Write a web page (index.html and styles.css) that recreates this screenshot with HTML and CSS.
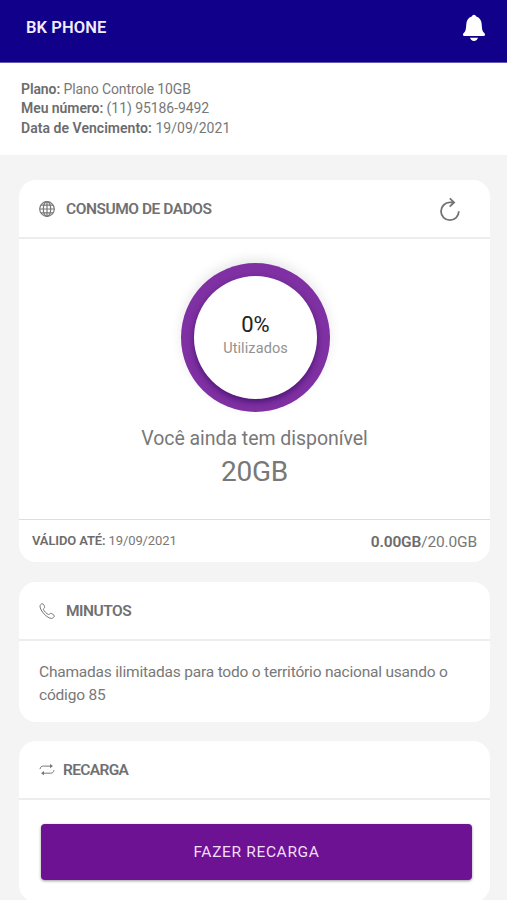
FILE: index.html
```html
<!DOCTYPE html>
<html lang="pt-BR">
<head>
<meta charset="utf-8">
<meta name="viewport" content="width=device-width, initial-scale=1">
<title>BK Phone</title>
<link rel="stylesheet" href="styles.css">
</head>
<body>
<header class="topbar">
  <h1 class="brand">BK PHONE</h1>
  <svg class="bell" viewBox="0 0 24 28" aria-hidden="true"><path d="M12 .7c1.200 0 1.700.9 2.300 1.900 3.300 1.200 5 3.400 5.400 7.500.3 4.600.4 7.100 2.600 8.900 1.300 1.100.8 3-.7 3H2.400c-1.500 0-2-1.900-.7-3 2.200-1.800 2.300-4.300 2.600-8.900.4-4.100 2.100-6.300 5.400-7.500C10.300 1.600 10.800.7 12 .7z"/><path d="M8 23.700h8c-.5 2-2 3.200-4 3.200s-3.500-1.200-4-3.200z"/></svg>
</header>
<section class="info">
  <p class="info-plan"><b>Plano:</b> Plano Controle 10GB</p>
  <p class="info-number"><b>Meu número:</b> (11) 95186-9492</p>
  <p class="info-due"><b>Data de Vencimento:</b> 19/09/2021</p>
</section>
<main class="cards">
  <section class="card usage">
    <div class="card-head">
      <svg class="icon" viewBox="0 0 16 16" aria-hidden="true"><circle cx="8" cy="8" r="7.300"/><ellipse cx="8" cy="8" rx="3.700" ry="7.300"/><path d="M8 .7v14.600M.7 8h14.600M1.800 4.200h12.400M1.800 11.800h12.400"/></svg>
      <h2 class="title title-data">CONSUMO DE DADOS</h2>
      <svg class="refresh" viewBox="0 0 22 26" aria-hidden="true"><path d="M19.800 15.300a8.900 8.900 0 1 1-8.900-8.900h3M10.800 2.300l4.300 4.100-4.400 4.300"/></svg>
    </div>
    <div class="usage-body">
      <div class="ring"><div class="disc"><strong class="percent">0%</strong><span class="used">Utilizados</span></div></div>
      <p class="available">Você ainda tem disponível</p>
      <p class="amount">20GB</p>
    </div>
    <div class="usage-foot">
      <p class="valid"><b>VÁLIDO ATÉ:</b> 19/09/2021</p>
      <p class="quota"><b>0.00GB</b>/20.0GB</p>
    </div>
  </section>
  <section class="card minutes">
    <div class="card-head">
      <svg class="icon" viewBox="0 0 16 16" aria-hidden="true"><path d="M1 3.200C1 2 2.200.7 3.200.7c1.300 0 2.600 2.700 2.400 3.700-.2.900-1.300 1-1.200 1.900.2 1.400 3.600 4.900 5.100 5.200.9.200 1.200-1.100 2.200-1.100 1.100 0 3.600 1.500 3.600 2.700 0 1.100-1.600 2.300-2.900 2.300C8.200 15.400 1 7.700 1 3.200z"/></svg>
      <h2 class="title title-minutes">MINUTOS</h2>
    </div>
    <p class="description">Chamadas ilimitadas para todo o território nacional usando o código 85</p>
  </section>
  <section class="card recharge">
    <div class="card-head">
      <svg class="icon" viewBox="0 0 16 16" aria-hidden="true"><path d="M1 7.200C1.200 5 2.500 4.100 4.500 4.100h7M15 8.100c-.2 2.200-1.500 3.100-3.500 3.100h-7"/><path class="arrow" d="M11 2l3 2.100-3 2.100zM5 9.100l-3 2.100 3 2.100z"/></svg>
      <h2 class="title title-recharge">RECARGA</h2>
    </div>
    <div class="action"><button class="button" type="button">FAZER RECARGA</button></div>
  </section>
</main>
</body>
</html>
```
FILE: styles.css
```css
* { box-sizing: border-box; }
body, h1, h2, p { margin: 0; }
html { overflow: hidden; }
body {
  height: 900px;
  overflow: hidden;
  background: #f4f4f4;
  color: #787878;
  font-family: Roboto, "Noto Sans", sans-serif;
}
b { font-weight: 600; color: #6c6c6c; }
.topbar {
  display: flex;
  justify-content: space-between;
  height: 63px;
  padding: 14px 21px 0 26px;
  background: #10008a;
  border-bottom: 1px solid #6258b0;
}
.brand { color: #f0edff; font-size: 16.500px; line-height: 27px; font-weight: 600; letter-spacing: .1px; }
.bell { width: 24px; height: 28px; fill: #fff; }
.info {
  height: 92px;
  padding: 17px 21px 0;
  background: #fff;
  font-size: 14px;
  line-height: 19.400px;
  white-space: nowrap;
}
.info-plan { letter-spacing: -.1px; }
.info-number { letter-spacing: -.07px; }
.info-due { letter-spacing: .04px; }
.cards {
  display: flex;
  flex-direction: column;
  gap: 20px;
  padding: 25px 17px 0 19px;
}
.card { flex: none; border-radius: 17px; background: #fff; }
.usage { height: 382px; }
.minutes { height: 140px; }
.recharge { height: 161px; margin-top: -1px; }
.card-head {
  display: flex;
  align-items: center;
  height: 59px;
  padding: 0 29px 0 20px;
  border-bottom: 2px solid #ededed;
}
.icon { width: 16px; height: 16px; margin-right: 11px; fill: none; stroke: #777; stroke-width: 1; }
.usage .icon { stroke-width: 1.200; }
.arrow { fill: #777; stroke: none; }
.recharge .icon { margin-right: 8px; }
.title { color: #707070; font-size: 15.500px; line-height: 20px; font-weight: 600; white-space: nowrap; }
.title-data { letter-spacing: -.45px; }
.title-minutes { letter-spacing: -.5px; }
.title-recharge { letter-spacing: -.65px; }
.refresh { width: 22px; height: 26px; margin-left: auto; fill: none; stroke: #747474; stroke-width: 1.800; }
.usage-body {
  display: flex;
  flex-direction: column;
  align-items: center;
  height: 280px;
  padding-top: 24px;
}
.ring {
  width: 149px;
  height: 149px;
  margin-left: 2px;
  padding: 13px;
  background: #7f30a2;
  border-radius: 50%;
  box-shadow: 0 -4px 12px #00000018;
}
.disc {
  display: flex;
  flex-direction: column;
  align-items: center;
  height: 123px;
  padding-top: 36px;
  border-radius: 50%;
  background: #fff;
  box-shadow: 0 3px 6px #26004f90;
}
.percent { color: #222; font-size: 22px; line-height: 25px; font-weight: 400; }
.used { color: #929292; font-size: 14.500px; line-height: 23px; letter-spacing: .1px; }
.available { margin-top: 13px; font-size: 19.500px; line-height: 28px; white-space: nowrap; letter-spacing: -.04px; }
.amount { margin-top: 1px; font-size: 28px; line-height: 36px; letter-spacing: -.2px; }
.usage-foot {
  display: flex;
  justify-content: space-between;
  height: 43px;
  padding: 11px 13px 0;
  border-top: 1px solid #dedede;
  white-space: nowrap;
}
.valid { font-size: 13px; line-height: 19px; letter-spacing: -.12px; }
.quota { font-size: 15.500px; line-height: 23px; letter-spacing: -.15px; }
.description { padding: 20px 20px 0; font-size: 15.500px; line-height: 23px; letter-spacing: -.2px; }
.action { padding: 24px 18px 0 22px; }
.button {
  display: block;
  width: 100%;
  height: 56px;
  padding: 0;
  border: 0;
  border-radius: 4px;
  background: #6c1293;
  color: #f5dcfb;
  font: 400 15.500px/56px Roboto, "Noto Sans", sans-serif;
  letter-spacing: .65px;
  box-shadow: 0 1px 3px #0006;
}
```
